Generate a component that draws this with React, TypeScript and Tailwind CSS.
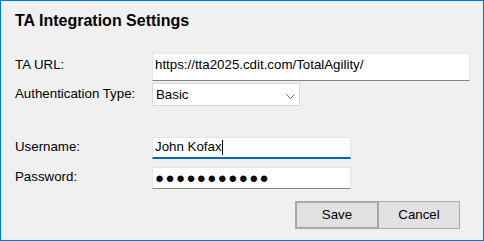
export default function App() {
  return (
    <div className="flex h-[241px] w-[484px] flex-col border border-[#0078d7] bg-[#f0f0f0] pl-[14px] pt-[10px] font-['Liberation_Sans',Arial,sans-serif] text-[13.3px] text-black">
      <h1 className="text-[16px] font-bold leading-[20px]">TA Integration Settings</h1>

      <div className="mt-[22px] flex items-start">
        <label className="w-[137px] pt-[4px] leading-[16px]">TA URL:</label>
        <div className="h-[28px] w-[318px] border border-[#e6e6e6] border-b-[#868686] bg-white px-[2px] pt-[3px] leading-[16px]">
          https://tta2025.cdit.com/TotalAgility/
        </div>
      </div>

      <div className="mt-[2px] flex items-start">
        <label className="w-[137px] pt-[3px] leading-[16px]">Authentication Type:</label>
        <div className="flex h-[23px] w-[148px] items-start justify-between border border-[#d9d9d9] bg-white pl-[3px] pr-[4px] pt-[3px] leading-[16px]">
          <span>Basic</span>
          <svg width="9" height="6" viewBox="0 0 9 6" className="mt-[7px]">
            <polyline points="0.5,0.5 4.5,4.5 8.5,0.5" fill="none" stroke="#6d6d6d" strokeWidth="1" />
          </svg>
        </div>
      </div>

      <div className="mt-[31px] flex items-start">
        <label className="w-[137px] pt-[2px] leading-[16px]">Username:</label>
        <div className="flex h-[22px] w-[199px] items-start border border-b-2 border-[#e6e6e6] border-b-[#0067c0] bg-white px-[2px] pt-[1px] leading-[16px]">
          <span>John Kofax</span>
          <span className="mt-[1px] inline-block h-[15px] w-px bg-black" />
        </div>
      </div>

      <div className="mt-[8px] flex items-start">
        <label className="w-[137px] pt-[2px] leading-[16px]">Password:</label>
        <div className="h-[22px] w-[199px] border border-[#e6e6e6] border-b-[#868686] bg-white px-[2px] pt-[2px] text-[15px] leading-[16px] tracking-[1.4px]">
          ●●●●●●●●●●●
        </div>
      </div>

      <div className="mt-[12px] flex pl-[280px]">
        <button className="flex h-[28px] w-[84px] items-center justify-center border-2 border-[#a8a8a8] bg-[#e1e1e1] leading-[16px]">
          Save
        </button>
        <button className="flex h-[28px] w-[81px] items-center justify-center border border-l-0 border-[#adadad] bg-[#e1e1e1] leading-[16px]">
          Cancel
        </button>
      </div>
    </div>
  );
}
